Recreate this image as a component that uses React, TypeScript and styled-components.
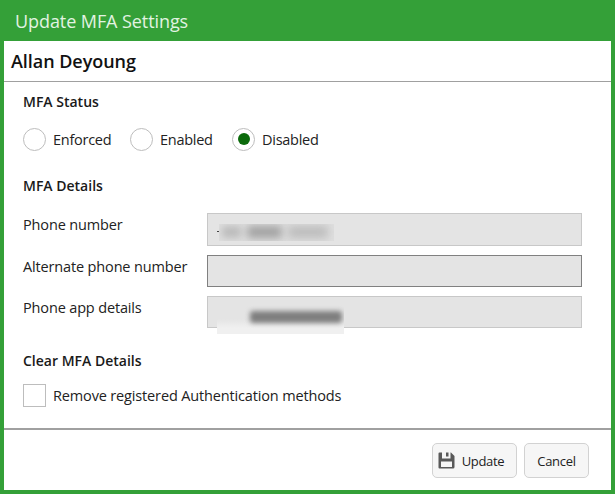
import React from "react";
import styled, { createGlobalStyle } from "styled-components";

const Global = createGlobalStyle`
  html, body { margin: 0; padding: 0; background: #34a038; }
  body { font-family: "Open Sans", "Noto Sans", "Liberation Sans", sans-serif; }
`;

const Dialog = styled.div`
  width: 615px;
  height: 494px;
  box-sizing: border-box;
  background: #34a038;
  padding: 0 4px 4px;
  display: flex;
  flex-direction: column;
`;

const TitleBar = styled.div`
  height: 41px;
  flex: none;
  display: flex;
  align-items: center;
  padding: 0 0 0 11px;
  color: #e2f3e2;
  font-size: 18px;
  letter-spacing: -0.08px;
`;

const Panel = styled.div`
  flex: 1;
  min-height: 0;
  background: #fff;
  display: flex;
  flex-direction: column;
  color: #1a1a1a;
`;

const UserHeader = styled.div`
  height: 40px;
  flex: none;
  box-sizing: border-box;
  display: flex;
  align-items: center;
  padding: 0 0 1px 7px;
  font-size: 18px;
  font-weight: 600;
  letter-spacing: -0.05px;
  color: #111;
`;

const Rule = styled.div<{ $h: number }>`
  flex: none;
  height: ${(p) => p.$h}px;
  background: #a0a0a0;
`;

const Body = styled.div`
  flex: 1;
  padding: 10px 29px 0 19px;
  display: flex;
  flex-direction: column;
`;

const SectionTitle = styled.div<{ $mt?: number }>`
  font-size: 14px;
  line-height: 20px;
  font-weight: 600;
  letter-spacing: 0;
  margin-top: ${(p) => p.$mt ?? 0}px;
`;

const RadioRow = styled.div`
  display: flex;
  align-items: center;
  margin-top: 15px;
  height: 24px;
`;

const RadioItem = styled.div<{ $w: number }>`
  display: flex;
  align-items: center;
  width: ${(p) => p.$w}px;
`;

const RadioCircle = styled.span<{ $on?: boolean }>`
  width: 23px;
  height: 23px;
  flex: none;
  box-sizing: border-box;
  border: 1.5px solid #bdbdbd;
  border-radius: 50%;
  background: #fff;
  display: flex;
  align-items: center;
  justify-content: center;
  &::after {
    content: "";
    display: ${(p) => (p.$on ? "block" : "none")};
    width: 12px;
    height: 12px;
    border-radius: 50%;
    background: #0b6a0b;
  }
`;

const OptionLabel = styled.span`
  margin-left: 7px;
  font-size: 14.5px;
  letter-spacing: -0.15px;
  color: #222;
  white-space: nowrap;
`;

const RadioLabel = styled(OptionLabel)`
  letter-spacing: -0.27px;
`;

const FieldGrid = styled.div`
  display: grid;
  grid-template-columns: 184px 375px;
  row-gap: 9px;
  margin-top: 17px;
`;

const FieldLabel = styled.div`
  font-size: 14.5px;
  line-height: 20px;
  letter-spacing: -0.15px;
  color: #222;
  padding-top: 2px;
`;

const FieldBox = styled.div<{ $strong?: boolean; $h: number }>`
  position: relative;
  height: ${(p) => p.$h}px;
  box-sizing: border-box;
  background: #e4e4e4;
  border: 1px solid ${(p) => (p.$strong ? "#808080" : "#c8c8c8")};
`;

const Redaction = styled.span<{ $l: number; $t: number; $w: number; $h: number; $bg: string }>`
  position: absolute;
  left: ${(p) => p.$l}px;
  top: ${(p) => p.$t}px;
  width: ${(p) => p.$w}px;
  height: ${(p) => p.$h}px;
  background: ${(p) => p.$bg};
  overflow: hidden;
`;

const Smudge = styled.span<{ $l: number; $t: number; $w: number; $h: number; $c: string; $b: number }>`
  position: absolute;
  left: ${(p) => p.$l}px;
  top: ${(p) => p.$t}px;
  width: ${(p) => p.$w}px;
  height: ${(p) => p.$h}px;
  background: ${(p) => p.$c};
  filter: blur(${(p) => p.$b}px);
  border-radius: 3px;
`;

const Dash = styled.span`
  position: absolute;
  left: 9px;
  top: 17px;
  width: 2px;
  height: 1px;
  background: #444;
`;

const CheckRow = styled.div`
  display: flex;
  align-items: center;
  margin-top: 12px;
  height: 24px;
`;

const CheckBox = styled.span`
  width: 23px;
  height: 23px;
  flex: none;
  box-sizing: border-box;
  border: 1.5px solid #bdbdbd;
  background: #fff;
`;

const Footer = styled.div`
  flex: none;
  height: 60px;
  box-sizing: border-box;
  padding: 13px 22px 0 0;
  display: flex;
  justify-content: flex-end;
  gap: 7px;
`;

const Button = styled.button<{ $w: number; $pr?: number }>`
  width: ${(p) => p.$w}px;
  height: 35px;
  box-sizing: border-box;
  display: flex;
  align-items: center;
  justify-content: center;
  gap: 7px;
  padding: 0 ${(p) => p.$pr ?? 0}px 0 0;
  background: #f6f6f6;
  border: 1px solid #d2d2d2;
  border-radius: 5px;
  font-family: inherit;
  font-size: 13px;
  font-weight: 500;
  letter-spacing: -0.3px;
  color: #222;
`;

const SaveIcon = () => (
  <svg width="17" height="17" viewBox="0 0 17 17" aria-hidden="true">
    <path
      fillRule="evenodd"
      fill="#595959"
      d="M1.5 0.5h11.5l3.5 3.5v11a1.5 1.5 0 0 1-1.5 1.5H1.5A1 1 0 0 1 0.5 15.5V1.5A1 1 0 0 1 1.5 0.5zM4 0.5v6h8.5v-6h-2v4H8v-4zM3 9.5v5.5h11V9.5z"
    />
  </svg>
);

export default function App() {
  return (
    <Dialog>
      <Global />
      <TitleBar>Update MFA Settings</TitleBar>
      <Panel>
        <UserHeader>Allan Deyoung</UserHeader>
        <Rule $h={1} />
        <Body>
          <SectionTitle>MFA Status</SectionTitle>
          <RadioRow>
            <RadioItem $w={107}>
              <RadioCircle />
              <RadioLabel>Enforced</RadioLabel>
            </RadioItem>
            <RadioItem $w={102}>
              <RadioCircle />
              <RadioLabel>Enabled</RadioLabel>
            </RadioItem>
            <RadioItem $w={100}>
              <RadioCircle $on />
              <RadioLabel>Disabled</RadioLabel>
            </RadioItem>
          </RadioRow>
          <SectionTitle $mt={25}>MFA Details</SectionTitle>
          <FieldGrid>
            <FieldLabel>Phone number</FieldLabel>
            <FieldBox $h={33}>
              <Dash />
              <Redaction $l={11} $t={10} $w={115} $h={17} $bg="#dedede">
                <Smudge $l={3} $t={2} $w={19} $h={12} $c="#bcbcbc" $b={3.5} />
                <Smudge $l={28} $t={2} $w={35} $h={12} $c="#a0a0a0" $b={4} />
                <Smudge $l={69} $t={2} $w={40} $h={12} $c="#bcbcbc" $b={4} />
              </Redaction>
            </FieldBox>
            <FieldLabel>Alternate phone number</FieldLabel>
            <FieldBox $h={32} $strong />
            <FieldLabel>Phone app details</FieldLabel>
            <FieldBox $h={32}>
              <Redaction $l={9} $t={7} $w={127} $h={30} $bg="linear-gradient(#e4e4e4 50%, #f0f0f0 80%)">
                <Smudge $l={33} $t={7} $w={92} $h={12} $c="#7e7e7e" $b={2.5} />
              </Redaction>
            </FieldBox>
          </FieldGrid>
          <SectionTitle $mt={23}>Clear MFA Details</SectionTitle>
          <CheckRow>
            <CheckBox />
            <OptionLabel>Remove registered Authentication methods</OptionLabel>
          </CheckRow>
        </Body>
        <Rule $h={2} />
        <Footer>
          <Button $w={85} $pr={7}>
            <SaveIcon />
            Update
          </Button>
          <Button $w={65}>Cancel</Button>
        </Footer>
      </Panel>
    </Dialog>
  );
}
